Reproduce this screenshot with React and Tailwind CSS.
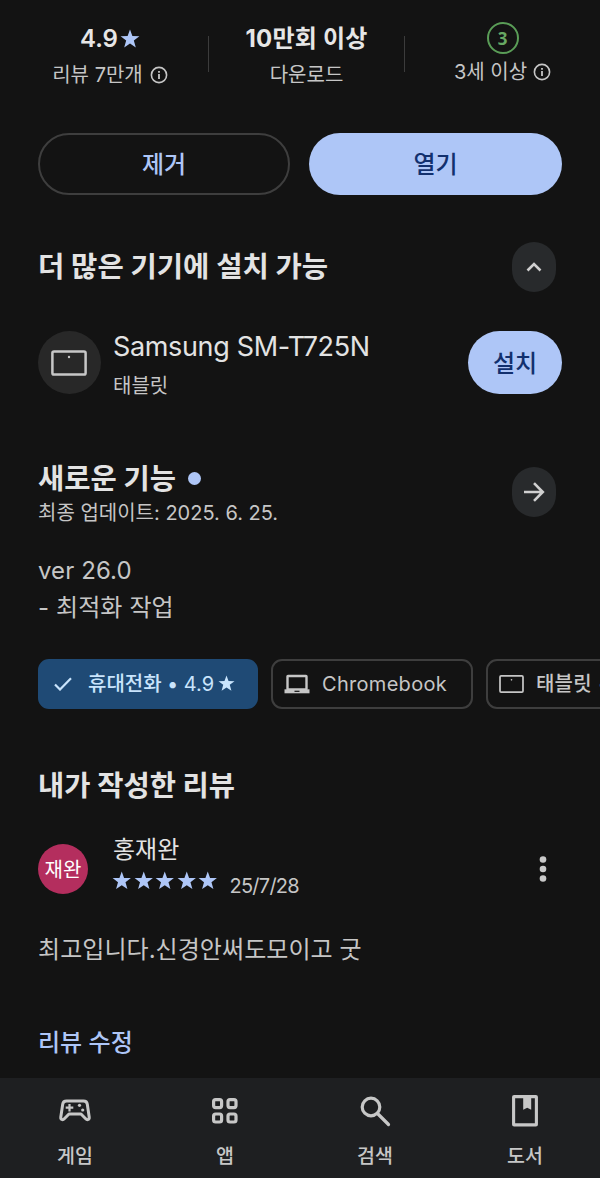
const P_STAR = "M12 .6l2.850 7.900 8.450.25-6.700 5.150 2.350 8.300L12 17.500 5.050 22.200l2.350-8.300L.7 8.750l8.450-.25z";

function Star({ className }) {
  return (
    <svg viewBox="0 0 24 24" className={className} fill="currentColor">
      <path d={P_STAR} />
    </svg>
  );
}

function Info({ className }) {
  return (
    <svg viewBox="0 0 18 18" className={className} fill="none" stroke="currentColor" strokeWidth="1.6">
      <circle cx="9" cy="9" r="7.6" />
      <path d="M9 8v5M9 5v1.8" strokeWidth="1.8" />
    </svg>
  );
}

function Tablet({ className, sw }) {
  return (
    <svg viewBox="0 0 36 26" className={className} fill="none" stroke="currentColor" strokeWidth={sw}>
      <rect x="1.4" y="1.4" width="33.2" height="23.2" rx="1.6" />
      <circle cx="18" cy="7" r="1.2" fill="currentColor" stroke="none" />
    </svg>
  );
}

function Stats() {
  return (
    <section className="grid h-[133px] grid-cols-[197px_196px_195px] pl-3 text-center">
      <div className="flex">
        <div className="flex flex-1 flex-col items-center pt-[23px]">
          <div className="flex h-8 items-center text-[24px] leading-8 font-semibold text-[#e6e6e6]">
            <span>4.9</span>
            <Star className="ml-0.5 size-5 text-[#aec6f7]" />
          </div>
          <div className="mt-1 flex h-8 items-center text-[20px] leading-8 text-[#c6c6c6]">
            <span>리뷰 7만개</span>
            <Info className="ml-[7px] size-[18px]" />
          </div>
        </div>
        <div className="mt-9 h-9 w-px bg-[#3c3c3c]" />
      </div>
      <div className="flex">
        <div className="flex flex-1 flex-col items-center pt-[23px]">
          <div className="h-8 text-[24px] leading-8 font-bold tracking-[0.2px] whitespace-nowrap text-[#e6e6e6]">10만회 이상</div>
          <div className="mt-1 h-8 text-[20px] leading-8 text-[#c6c6c6]">다운로드</div>
        </div>
        <div className="mt-9 h-9 w-px bg-[#3c3c3c]" />
      </div>
      <div className="flex flex-col items-center pt-[22px]">
        <div className="flex size-8 items-center justify-center rounded-full border-[2.5px] border-[#5a9d57] font-['Open_Sans',sans-serif] text-[17px] leading-none font-bold text-[#67a863]">3</div>
        <div className="mt-0.5 flex h-8 items-center text-[20px] leading-8 text-[#c6c6c6]">
          <span>3세 이상</span>
          <Info className="ml-[6px] size-[18px]" />
        </div>
      </div>
    </section>
  );
}

function Nav() {
  return (
    <nav className="grid h-[100px] shrink-0 grid-cols-4 bg-[#1e1f21] text-[19.5px] leading-8 font-medium text-[#c7c7c7]">
      <div className="flex flex-col items-center pt-[15px]">
        <svg viewBox="0 0 36 36" className="size-9" fill="none" stroke="currentColor" strokeWidth="3" strokeLinejoin="round">
          <path d="M9.500 8h17c2.300 0 3.500 1.200 3.800 3.200l1.900 12.800c.4 2.600-1.900 3.400-3.500 1.800L24 21H12l-4.700 4.800c-1.600 1.600-3.900.8-3.500-1.800l1.900-12.800C6 9.200 7.200 8 9.500 8z" />
          <path d="M12.500 11v7.500M8.700 14.700h7.600" strokeWidth="2.200" />
          <circle cx="22.500" cy="12.300" r="1.600" fill="currentColor" stroke="none" />
          <circle cx="25.700" cy="17" r="1.600" fill="currentColor" stroke="none" />
        </svg>
        <span className="mt-[11px]">게임</span>
      </div>
      <div className="flex flex-col items-center pt-[15px]">
        <svg viewBox="0 0 36 36" className="size-9" fill="none" stroke="currentColor" strokeWidth="3.200">
          <rect x="6.600" y="6.600" width="8" height="8" rx="2" />
          <rect x="21" y="6.600" width="8" height="8" rx="2" />
          <rect x="6.600" y="21" width="8" height="8" rx="2" />
          <rect x="21" y="21" width="8" height="8" rx="2" />
        </svg>
        <span className="mt-[11px]">앱</span>
      </div>
      <div className="flex flex-col items-center pt-[15px]">
        <svg viewBox="0 0 36 36" className="size-9" fill="none" stroke="currentColor" strokeWidth="3.200" strokeLinecap="round">
          <circle cx="14" cy="14" r="8.800" />
          <path d="M20.500 20.500l11 11" />
        </svg>
        <span className="mt-[11px]">검색</span>
      </div>
      <div className="flex flex-col items-center pt-[15px]">
        <svg viewBox="0 0 36 36" className="size-9" fill="none" stroke="currentColor" strokeWidth="3.100" strokeLinejoin="round">
          <rect x="6.600" y="3.600" width="22.800" height="28.300" rx="0.500" />
          <path d="M16.200 4h8v12.700l-4-2-4 2z" fill="currentColor" stroke="none" />
        </svg>
        <span className="mt-[11px]">도서</span>
      </div>
    </nav>
  );
}

export default function App() {
  return (
    <div className="flex h-[1178px] w-[600px] flex-col overflow-hidden bg-[#131313] font-[Inter,'Noto_Sans_CJK_KR',sans-serif] text-[#e3e3e3]">
      <Stats />
      <main className="flex flex-1 flex-col px-[38px]">
        <div className="grid h-[62px] grid-cols-[252px_253px] gap-[19px] text-[24px] font-medium">
          <button className="rounded-full border-2 border-[#3e3e3e] pt-0.5 text-[#aec6f7]">제거</button>
          <button className="rounded-full bg-[#aec6f7] pt-0.5 text-[#12306e]">열기</button>
        </div>

        <div className="mt-[47px] flex h-[50px] items-center justify-between pr-1.5">
          <h2 className="text-[28.6px] leading-10 font-bold">더 많은 기기에 설치 가능</h2>
          <button className="flex h-[50px] w-11 items-center justify-center rounded-full bg-[#282a2c]">
            <svg viewBox="0 0 16 10" className="h-2.5 w-4" fill="none" stroke="#d0d0d0" strokeWidth="2.600">
              <path d="M1.500 8.500L8 2l6.500 6.500" />
            </svg>
          </button>
        </div>

        <div className="mt-[39px] flex h-[63px]">
          <div className="flex size-[63px] items-center justify-center rounded-full bg-[#282828] pr-px">
            <Tablet className="h-[26px] w-9 text-[#c7c7c7]" sw="2.500" />
          </div>
          <div className="ml-3 flex-1">
            <div className="-mt-0.5 h-9 text-[27px] leading-9 tracking-[-0.35px]">Samsung SM-T725N</div>
            <div className="mt-[5px] text-[20px] leading-8 text-[#c6c6c6]">태블릿</div>
          </div>
          <button className="h-[63px] w-[94px] rounded-full bg-[#aec6f7] pt-0.5 text-[24px] font-medium text-[#12306e]">설치</button>
        </div>

        <div className="mt-[65px] flex h-[70px] justify-between pr-1.5">
          <div>
            <div className="flex h-10 items-center">
              <h2 className="text-[28.5px] leading-10 font-bold">새로운 기능</h2>
              <span className="mb-0.5 ml-3 size-[13px] rounded-full bg-[#aec6f7]" />
            </div>
            <div className="-mt-0.5 text-[20px] leading-8 text-[#c6c6c6]">최종 업데이트: 2025. 6. 25.</div>
          </div>
          <button className="mt-2 flex h-[50px] w-11 items-center justify-center rounded-full bg-[#282a2c]">
            <svg viewBox="0 0 22 20" className="h-5 w-[22px]" fill="none" stroke="#d0d0d0" strokeWidth="2.600">
              <path d="M1 10h18.500M11 1.200l8.800 8.800-8.800 8.800" />
            </svg>
          </button>
        </div>

        <div className="mt-[24px] text-[24px] leading-9 text-[#c6c6c6]">
          <div className="tracking-[0.1px]">ver 26.0</div>
          <div className="pt-px tracking-[0.1px]">- 최적화 작업</div>
        </div>

        <div className="mt-[32.5px] flex h-[50.500px] w-[562px] shrink-0 gap-[13px] overflow-hidden text-[20px] whitespace-nowrap">
          <div className="flex w-[220px] shrink-0 items-center rounded-[11px] bg-[#1f4a75] pl-4 font-medium text-[#c9e4fc]">
            <svg viewBox="0 0 18 14" className="mr-4 h-3.5 w-[18px]" fill="none" stroke="currentColor" strokeWidth="2.200">
              <path d="M1 7.500l5 5L17 1.200" />
            </svg>
            <span>휴대전화 <span className="font-normal">• 4.9</span></span>
            <Star className="ml-1 size-[17px]" />
          </div>
          <div className="flex w-[202px] shrink-0 items-center rounded-[11px] border-2 border-[#3e3e3e] pl-[11px] text-[#c6c6c6]">
            <svg viewBox="0 0 26 20" className="mr-3 h-5 w-[26px]" fill="none" stroke="currentColor" strokeWidth="2.400">
              <rect x="3.500" y="2" width="19" height="13.500" rx="0.500" />
              <path d="M0.500 17.300h25" strokeWidth="4" />
              <path d="M10.500 17.300h5" stroke="#131313" strokeWidth="1.200" />
            </svg>
            <span className="tracking-[0.3px]">Chromebook</span>
          </div>
          <div className="flex w-[202px] shrink-0 items-center rounded-[11px] border-2 border-[#3e3e3e] pl-[11px] font-medium text-[#c6c6c6]">
            <Tablet className="mr-3 h-[18px] w-[25px]" sw="2.500" />
            <span className="tracking-[0.2px]">태블릿</span>
            <span className="ml-1.5">•</span>
          </div>
        </div>

        <h2 className="mt-[57px] text-[28.5px] leading-10 font-bold">내가 작성한 리뷰</h2>

        <div className="mt-[26px] flex h-[70px] items-start">
          <div className="mt-[12px] flex size-[50px] items-center justify-center rounded-full bg-[#b42e5e] pt-0.5 text-[20px] text-white">재완</div>
          <div className="ml-[25px] flex-1">
            <div className="h-9 text-[24px] leading-9">홍재완</div>
            <div className="flex h-8 items-start text-[#aec6f7]">
              <div className="mt-[3px] -ml-px flex gap-0.5">
                {[0, 1, 2, 3, 4].map((i) => (
                  <Star key={i} className="size-[19.500px]" />
                ))}
              </div>
              <span className="ml-3 text-[20px] leading-9 tracking-[-0.75px] text-[#c6c6c6]">25/7/28</span>
            </div>
          </div>
          <svg viewBox="0 0 8 28" className="mt-[23px] mr-[15px] h-7 w-2" fill="#c9c9c9">
            <circle cx="4" cy="4.500" r="3.300" />
            <circle cx="4" cy="14" r="3.300" />
            <circle cx="4" cy="23.500" r="3.300" />
          </svg>
        </div>

        <div className="mt-[30px] text-[24px] leading-9 tracking-[0.05px] text-[#c6c6c6]">최고입니다.신경안써도모이고 굿</div>
        <div className="mt-[57px] text-[24px] leading-9 font-medium text-[#aec6f7]">리뷰 수정</div>
      </main>
      <Nav />
    </div>
  );
}
